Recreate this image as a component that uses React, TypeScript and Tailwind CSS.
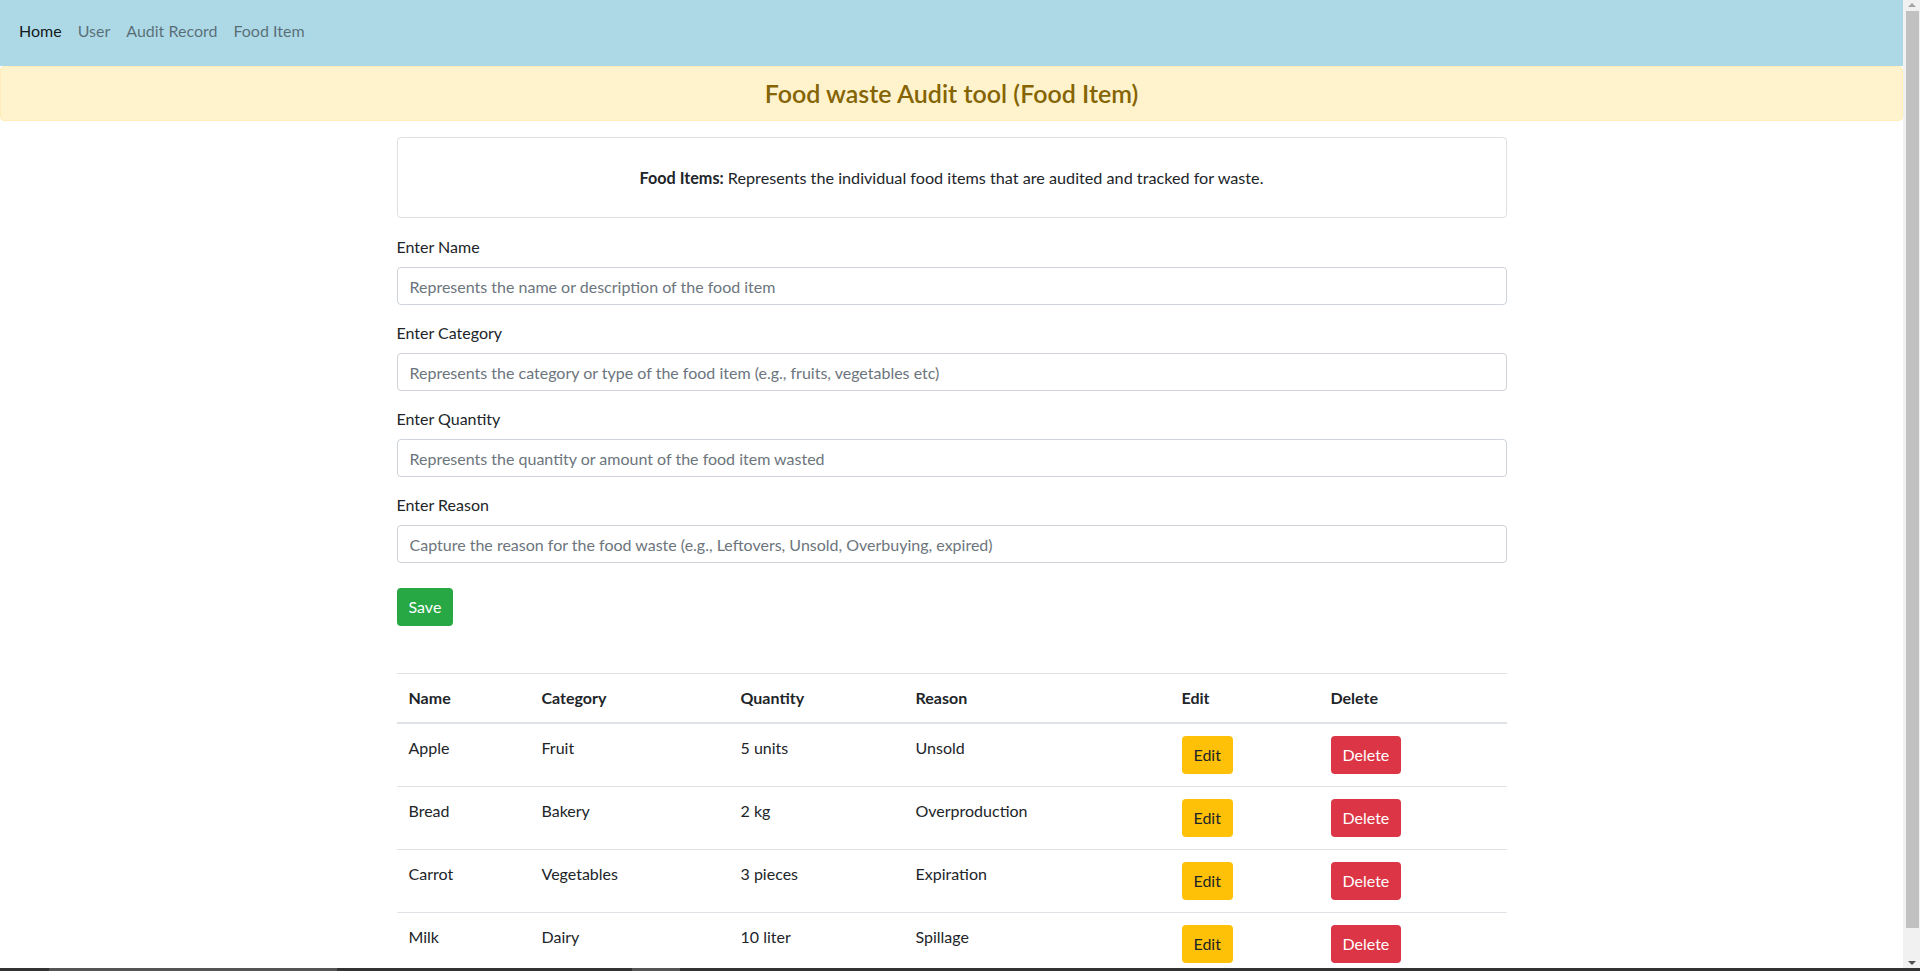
import React from 'react';

type FoodItem = {
  name: string;
  category: string;
  quantity: string;
  reason: string;
};

const items: FoodItem[] = [
  { name: 'Apple', category: 'Fruit', quantity: '5 units', reason: 'Unsold' },
  { name: 'Bread', category: 'Bakery', quantity: '2 kg', reason: 'Overproduction' },
  { name: 'Carrot', category: 'Vegetables', quantity: '3 pieces', reason: 'Expiration' },
  { name: 'Milk', category: 'Dairy', quantity: '10 liter', reason: 'Spillage' },
];

const fields = [
  { label: 'Enter Name', placeholder: 'Represents the name or description of the food item' },
  { label: 'Enter Category', placeholder: 'Represents the category or type of the food item (e.g., fruits, vegetables etc)' },
  { label: 'Enter Quantity', placeholder: 'Represents the quantity or amount of the food item wasted' },
  { label: 'Enter Reason', placeholder: 'Capture the reason for the food waste (e.g., Leftovers, Unsold, Overbuying, expired)' },
];

const font = { fontFamily: '"Segoe UI", Lato, "Noto Sans", "Liberation Sans", sans-serif' };

function Navbar() {
  return (
    <nav className="h-[66px] bg-[#add8e6] flex items-center pl-[11px] pb-[4px]">
      <a className="px-2 leading-6 text-black/90">Home</a>
      <a className="px-2 leading-6 text-black/50">User</a>
      <a className="px-2 leading-6 text-black/50">Audit Record</a>
      <a className="px-2 leading-6 text-black/50">Food Item</a>
    </nav>
  );
}

export default function App() {
  return (
    <div className="w-[1920px] h-[971px] overflow-hidden flex flex-col bg-white text-[16px] text-[#212529]" style={font}>
      <div className="flex flex-1 min-h-0">
        <div className="flex-1 min-w-0 overflow-hidden">
          <Navbar />
          <div className="h-[55px] bg-[#fff3cd] border border-[#ffeeba] rounded-[4px] flex items-center justify-center">
            <h4 className="text-[25px] font-semibold text-[#856404] leading-[29px]">Food waste Audit tool (Food Item)</h4>
          </div>

          <div className="w-[1110px] mx-auto mt-4">
            <div className="h-[81px] border border-black/[0.125] rounded-[4px] flex items-center justify-center mb-[17px]">
              <p className="leading-6 text-[16.2px]">
                <b className="font-bold">Food Items:</b> Represents the individual food items that are audited and tracked for waste.
              </p>
            </div>

            <form onSubmit={(e) => e.preventDefault()}>
              {fields.map((f) => (
                <div key={f.label} className="mb-4">
                  <label className="block leading-6 mb-2">{f.label}</label>
                  <input
                    placeholder={f.placeholder}
                    className="w-full h-[38px] px-3 border border-[#ced4da] rounded-[4px] outline-none placeholder:text-[#6c757d]"
                  />
                </div>
              ))}
              <button className="mt-[9px] h-[38px] px-3 bg-[#28a745] text-white rounded-[4px] leading-6">Save</button>
            </form>

            <table className="w-full mt-[47px] border-collapse text-left">
              <thead>
                <tr className="border-t border-[#dee2e6] border-b-2 border-b-[#dee2e6]">
                  <th className="w-[133px] p-3 font-bold leading-6">Name</th>
                  <th className="w-[199px] p-3 font-bold leading-6">Category</th>
                  <th className="w-[175px] p-3 font-bold leading-6">Quantity</th>
                  <th className="w-[266px] p-3 font-bold leading-6">Reason</th>
                  <th className="w-[149px] p-3 font-bold leading-6">Edit</th>
                  <th className="w-[188px] p-3 font-bold leading-6">Delete</th>
                </tr>
              </thead>
              <tbody>
                {items.map((it) => (
                  <tr key={it.name} className="border-t border-[#dee2e6]">
                    <td className="p-3 align-top leading-6">{it.name}</td>
                    <td className="p-3 align-top leading-6">{it.category}</td>
                    <td className="p-3 align-top leading-6">{it.quantity}</td>
                    <td className="p-3 align-top leading-6">{it.reason}</td>
                    <td className="p-3 align-top">
                      <button className="h-[38px] px-3 bg-[#ffc107] text-[#212529] rounded-[4px] leading-6">Edit</button>
                    </td>
                    <td className="p-3 align-top">
                      <button className="h-[38px] px-3 bg-[#dc3545] text-white rounded-[4px] leading-6">Delete</button>
                    </td>
                  </tr>
                ))}
              </tbody>
            </table>
          </div>
        </div>

        {/* fake browser scrollbar */}
        <div className="w-[17px] bg-[#f1f1f1] flex flex-col items-center">
          <div className="h-[10px] flex items-center justify-center">
            <div className="w-0 h-0 border-l-[4px] border-r-[4px] border-b-[4px] border-l-transparent border-r-transparent border-b-[#a3a3a3]" />
          </div>
          <div className="w-[13px] flex-1 bg-[#c1c1c1] mt-[1px] mb-[30px] ml-[2px]" />
          <div className="h-[10px] flex items-center justify-center">
            <div className="w-0 h-0 border-l-[4px] border-r-[4px] border-t-[4px] border-l-transparent border-r-transparent border-t-[#505050]" />
          </div>
        </div>
      </div>
      <div className="h-[3px] bg-[#333] flex">
        <div className="w-[49px]" />
        <div className="w-[288px] bg-[#555]" />
        <div className="w-[295px]" />
        <div className="w-[48px] bg-[#555]" />
      </div>
    </div>
  );
}
